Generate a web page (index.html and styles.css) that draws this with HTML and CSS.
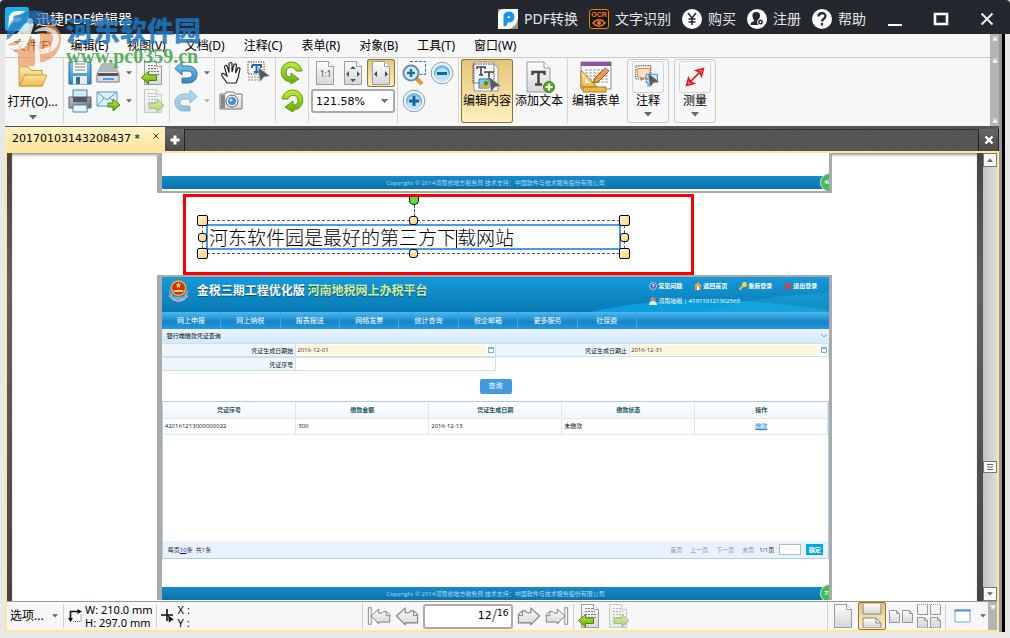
FILE: index.html
```html
<!DOCTYPE html>
<html lang="zh-CN">
<head>
<meta charset="utf-8">
<title>迅捷PDF编辑器</title>
<link rel="stylesheet" href="styles.css">
</head>
<body>
<svg class="defs" aria-hidden="true">
  <defs>
    <linearGradient id="blue" x1="0" y1="0" x2="0" y2="1"><stop offset="0" stop-color="#7cc8f2"/><stop offset="1" stop-color="#2f86c8"/></linearGradient>
    <linearGradient id="grey" x1="0" y1="0" x2="0" y2="1"><stop offset="0" stop-color="#fdfdfd"/><stop offset="1" stop-color="#d4d6d8"/></linearGradient>
    <linearGradient id="green" x1="0" y1="0" x2="0" y2="1"><stop offset="0" stop-color="#c2ec3c"/><stop offset="1" stop-color="#62a80c"/></linearGradient>
    <linearGradient id="gold" x1="0" y1="0" x2="0" y2="1"><stop offset="0" stop-color="#ffe9a8"/><stop offset="1" stop-color="#efb648"/></linearGradient>
    <linearGradient id="steel" x1="0" y1="0" x2="1" y2="1"><stop offset="0" stop-color="#c9cdd2"/><stop offset="1" stop-color="#646a72"/></linearGradient>
  </defs>
  <symbol id="sheet" viewBox="0 0 24 24"><path d="M3.500.5h12l5 5v18h-17z" fill="url(#grey)" stroke="#9a9c9e"/><path d="M15.500.5v5h5" fill="#fff" stroke="#9a9c9e"/></symbol>
  <symbol id="textsheet" viewBox="0 0 24 24"><use href="#sheet"/><path d="M7 4.500h8M7 7.500h10M7 10.500h11M7 13.500h11" stroke="#777" stroke-dasharray="2 1"/></symbol>
  <symbol id="prev" viewBox="0 0 24 24"><use href="#textsheet"/><path d="M.5 16.500l7-6v3.500h8v5.500h-8V23z" fill="url(#green)" stroke="#4c8708"/></symbol>
  <symbol id="next" viewBox="0 0 24 24"><use href="#textsheet"/><path d="M23 16.500l-7-6v3.500H8v5.500h8V23z" fill="url(#green)" stroke="#4c8708"/></symbol>
  <symbol id="undo" viewBox="0 0 24 24"><path d="M.8 7.500L8 1v4h6c12 0 12 17 0 17H8v-5h6c5.500 0 5.500-7 0-7H8v4z" fill="url(#blue)" stroke="#2c75ae"/></symbol>
  <symbol id="rotate" viewBox="0 0 24 24"><path d="M11 21C-2 20-2 2 11 1c6 0 10 4 11 9h-6c-1-5-10-5-10 1 0 4 2 5 5 5v-4l8 6-8 5z" fill="url(#green)" stroke="#579b0a"/></symbol>
  <symbol id="circle" viewBox="0 0 24 24"><circle cx="12" cy="12" r="10.800" fill="#f4f6f8" stroke="#8d9aa4"/><circle cx="12" cy="12" r="8" fill="url(#blue)"/><circle cx="12" cy="14" r="7" fill="#b8e3fb"/></symbol>
  <symbol id="caret" viewBox="0 0 8 5"><path d="M0 0h8L4 4.500z" fill="#666"/></symbol>
  <symbol id="cursor" viewBox="0 0 14 16"><path d="M1 0l12 9-6 1-4 5z" fill="#555b62" stroke="#dadada" stroke-width=".5"/></symbol>
  <symbol id="navarrow" viewBox="0 0 26 24"><path d="M1.500 12L11 3.500v5h4l2-2h3.500l4 4v9H11v2z" fill="url(#grey)" stroke="#808080" stroke-width="1.200"/><path d="M20 6.500v5h4.500" fill="none" stroke="#808080"/></symbol>
  <symbol id="collapse" viewBox="0 0 8 6"><path d="M1 .5h6M1 5h6M4 1L1 4h6z" fill="#fff" stroke="#fff" stroke-width=".8"/></symbol>
</svg>

<header class="titlebar">
  <svg class="app-logo" viewBox="0 0 24 24"><rect width="24" height="24" rx="3" fill="#1bb0ee"/><path d="M3 22C5 14 1 6 11 4h9c-1 4-4 4-8 4-3 0-4 2-4 4 4-2 6-2 9-1-1 4-4 4-7 4-4 1-5 4-7 7z" fill="#fff"/></svg>
  <h1 class="app-name">迅捷PDF编辑器</h1>
  <nav class="title-links">
    <a href="#convert"><svg viewBox="0 0 20 20"><path d="M0 0h20v20H0z" fill="#fff"/><path d="M0 0h6Q0 0 0 6zM20 20H10q9-2 10-11z" fill="#8b9299"/><path d="M6 17V6q1-3 5-3 5 0 5 5t-5 5H9.500V9.500H11q1.500 0 1.500-1.500T11 6.500q-2 0-2 2V14q0 3-3 3z" fill="#1994f0" stroke="#1994f0"/></svg>PDF转换</a>
    <a href="#ocr"><span class="ocr"><span>OCR</span><svg viewBox="0 0 14 8"><path d="M1 4q6-6.500 12 0-6 6.500-12 0z" fill="none" stroke="#f47a16" stroke-width="1.500"/><circle cx="7" cy="4" r="2" fill="#f47a16"/></svg></span>文字识别</a>
    <a href="#buy"><svg viewBox="0 0 20 20"><circle cx="10" cy="10" r="10" fill="#fff"/><path d="M6 4l4 5 4-5M10 9v7M6.500 10h7M6.500 13h7" fill="none" stroke="#25272f" stroke-width="1.500"/></svg>购买</a>
    <a href="#register"><svg viewBox="0 0 20 20"><circle cx="10" cy="10" r="10" fill="#fff"/><path d="M9 3c6 0 4 6 2.500 8l2 2V16H3.500c0-3 2-3 4-4C5 9 4 3 9 3z" fill="#25272f"/><circle cx="13.500" cy="13" r="3" fill="#25272f" stroke="#fff"/><circle cx="13.500" cy="13" r="1" fill="#fff"/></svg>注册</a>
    <a href="#help"><svg viewBox="0 0 20 20"><circle cx="10" cy="10" r="10" fill="#fff"/><path d="M6.500 7.500C6.500 3 13.500 3 13.500 7c0 3-3.500 2.500-3.500 5.500M10 14v2.500" fill="none" stroke="#25272f" stroke-width="2.200"/></svg>帮助</a>
  </nav>
  <div class="window-buttons">
    <button aria-label="最小化"><svg viewBox="0 0 16 16"><path d="M1 14h14" stroke="#fff" stroke-width="2"/></svg></button>
    <button aria-label="最大化"><svg viewBox="0 0 16 16"><path d="M2 3h12v10H2z" fill="none" stroke="#fff" stroke-width="2.600"/></svg></button>
    <button aria-label="关闭"><svg viewBox="0 0 16 16"><path d="M2.500 2.500l11 11M13.500 2.500l-11 11" stroke="#eee" stroke-width="2"/></svg></button>
  </div>
</header>

<main class="workspace">
  <div class="ribbon">
    <div class="ribbon-main">
      <nav class="menubar">
        <button>文件(F)</button><button>编辑(E)</button><button>视图(V)</button><button>文档(D)</button><button>注释(C)</button><button>表单(R)</button><button>对象(B)</button><button>工具(T)</button><button>窗口(W)</button>
      </nav>
      <div class="toolbar">
        <div class="group">
          <button class="open"><svg class="folder" viewBox="0 0 32 26"><path d="M1 24V3h10l3 4h12v5" fill="url(#gold)" stroke="#c98f2a"/><path d="M1 24l6-12h24l-5 12z" fill="url(#gold)" stroke="#c98f2a"/></svg><span>打开(O)...</span><svg class="caret"><use href="#caret"/></svg></button>
        </div>
        <div class="group icons three">
          <button aria-label="保存"><svg viewBox="0 0 24 24"><path d="M1 1h20l2 2v20H1z" fill="url(#blue)" stroke="#23689e"/><path d="M5 1h14v11H5z" fill="#fff"/><path d="M7 3h10M7 6h10M7 9h10" stroke="#777"/><path d="M5 15h14v8H5z" fill="#e6ebef"/><path d="M8 16h4v7H8z" fill="#3c6a91"/></svg></button>
          <button aria-label="扫描"><svg viewBox="0 0 24 24"><path d="M6 3h12l5 10v8H1v-8z" fill="url(#grey)" stroke="#777"/><path d="M1 11L6 3h12l5 8z" fill="#b4b7ba"/><path d="M2 12h20v3H2z" fill="#555"/><path d="M7 17h11v2H7z" fill="#49a0ef"/></svg></button>
          <button class="drop" aria-label="扫描选项"><svg class="caret"><use href="#caret"/></svg></button>
          <button aria-label="打印"><svg viewBox="0 0 24 24"><path d="M5 1h14v8H5z" fill="#d2ebf9" stroke="#4b84aa"/><path d="M1 8h22v11H1z" fill="url(#steel)" stroke="#666"/><path d="M5 8h14v5H5z" fill="#54595f"/><path d="M5 16h14v7H5z" fill="#eef7fd" stroke="#4b84aa"/></svg></button>
          <button aria-label="邮件"><svg viewBox="0 0 24 24"><path d="M1 3h20v14H1z" fill="#dff1fc" stroke="#4f9ac8"/><path d="M1 3l10 8L21 3M1 17l7-8M21 17l-7-8" fill="none" stroke="#4f9ac8"/><path d="M12 14h5v-4l7 6-7 6v-4h-5z" fill="url(#green)" stroke="#4c8708"/></svg></button>
          <button class="drop" aria-label="邮件选项"><svg class="caret"><use href="#caret"/></svg></button>
        </div>
        <div class="group icons one">
          <button aria-label="上一视图"><svg><use href="#prev"/></svg></button>
          <button aria-label="下一视图" disabled><svg><use href="#next"/></svg></button>
        </div>
        <div class="group icons two-drop">
          <button aria-label="撤销"><svg><use href="#undo"/></svg></button>
          <button class="drop" aria-label="撤销列表"><svg class="caret"><use href="#caret"/></svg></button>
          <button aria-label="重做" disabled><svg class="flip"><use href="#undo"/></svg></button>
          <button class="drop" aria-label="重做列表" disabled><svg class="caret"><use href="#caret"/></svg></button>
        </div>
        <div class="group icons two">
          <button aria-label="手形工具"><svg viewBox="0 0 24 24"><path d="M8 22l-5-7q-1-3 1.500-2.500L8 15 5.500 6q.5-2.500 2.500-1l2 6.500V2.500q1.500-2 3 0V11l2-7.500q2-1.500 2.500.5l-1 8L19 7q2-1 2 1l-2 9-2 5z" fill="#fff" stroke="#222" stroke-width="1.200"/></svg></button>
          <button aria-label="选择文本"><svg viewBox="0 0 24 24"><path d="M1 1h16v12H1z" fill="#fff" stroke="#444" stroke-dasharray="1.500 1"/><path d="M5 4h9v3M5 4v3M9.500 4v7M7 11h5" fill="none" stroke="#2167ad" stroke-width="2"/><path d="M1 16h12M1 19h12" stroke="#888" stroke-dasharray="2 1"/><use href="#cursor" x="10" y="6" width="14" height="16"/></svg></button>
          <button aria-label="快照"><svg viewBox="0 0 24 24"><path d="M1 5h5l1-2h8l1 2h7v15H1z" fill="url(#grey)" stroke="#777"/><path d="M2 6h4v13H2z" fill="#83888d"/><circle cx="13" cy="12" r="6" fill="#eee" stroke="#666"/><circle cx="13" cy="12" r="4" fill="#458cd8"/><circle cx="12" cy="11" r="1.500" fill="#bfe1ff"/></svg></button>
        </div>
        <div class="group icons one">
          <button aria-label="向左旋转"><svg><use href="#rotate"/></svg></button>
          <button aria-label="向右旋转"><svg class="flip"><use href="#rotate"/></svg></button>
        </div>
        <div class="group icons fit">
          <button aria-label="实际大小"><svg viewBox="0 0 24 24"><use href="#sheet"/><text x="7" y="16" class="one-one">1:1</text></svg></button>
          <button aria-label="适合页面"><svg viewBox="0 0 24 24"><use href="#sheet"/><path d="M12 5l3 3H9zM12 21l3-3H9zM5 13l3-3v6zM19 13l-3-3v6z" fill="#555"/></svg></button>
          <button class="on" aria-label="适合宽度"><svg viewBox="0 0 24 24"><use href="#sheet"/><path d="M5 13l3-3v6zM19 13l-3-3v6z" fill="#444"/></svg></button>
          <select class="zoom" aria-label="缩放"><option>121.58%</option></select>
        </div>
        <div class="group icons two">
          <button aria-label="区域放大"><svg viewBox="0 0 24 24"><path d="M8 .5h15.500v13H16" fill="none" stroke="#2c74b4" stroke-dasharray="3 1.500"/><path d="M14 17l6 6" stroke="#e79424" stroke-width="4"/><circle cx="9" cy="12" r="7.500" fill="#d8effc" stroke="#6c8ba6" stroke-width="2"/><path d="M9 8v8M5 12h8" stroke="#1a6cb0" stroke-width="2.500"/></svg></button>
          <button aria-label="缩小"><svg viewBox="0 0 24 24"><use href="#circle"/><path d="M7 11h10v3H7z" fill="#17649b"/></svg></button>
          <button aria-label="放大"><svg viewBox="0 0 24 24"><use href="#circle"/><path d="M12 7v10M7 12h10" stroke="#17649b" stroke-width="3"/></svg></button>
        </div>
        <div class="group wide">
          <button class="big on"><svg viewBox="0 0 32 32"><path d="M5 1h17l5 6v23H3V1z" fill="#f8f8f8" stroke="#999"/><path d="M2 3h21v19H2z" fill="none" stroke="#333" stroke-dasharray="1.500 1"/><path d="M6 8V6h8v2M10 6v8M8 14h4M14 12v-1h8v1M18 11v7M16 18h4" fill="none" stroke="#444" stroke-width="1.600"/><path d="M8 18h10v9H8z" fill="#88c7f4" stroke="#2b78a5"/><path d="M8 27l4-4 3 1 3-3v6z" fill="#e9a631"/><circle cx="15" cy="22" r="2.200" fill="#3a9625"/><use href="#cursor" x="17" y="16" width="14" height="16"/></svg><span>编辑内容</span></button>
          <button class="big"><svg viewBox="0 0 32 32"><path d="M4 1h17l6 6v24H4z" fill="url(#grey)" stroke="#999"/><path d="M21 1v6h6" fill="#fff" stroke="#999"/><path d="M9.500 14v-3h12v3M15.500 10.500V23M12 23.500h7" fill="none" stroke="#444" stroke-width="2.500"/><circle cx="26" cy="26" r="5.500" fill="#59a81f" stroke="#3e7e13"/><path d="M26 22.500v7M22.500 26h7" stroke="#fff" stroke-width="2.200"/></svg><span>添加文本</span></button>
        </div>
        <div class="group wide last">
          <button class="big"><svg viewBox="0 0 32 32"><path d="M1 1h30v27H1z" fill="#fafafa" stroke="#888"/><path d="M1 1h30v4H1z" fill="#8f50a8"/><path d="M5 9h24M5 12h24M5 15h24M5 18h24M5 21h24" stroke="#999" stroke-dasharray="3 1"/><path d="M1 9l16 17H1z" fill="url(#gold)" stroke="#b07a1e"/><path d="M5 17l5 5H5z" fill="#fff"/><path d="M3 26h23v5H3z" fill="#efb547" stroke="#b07a1e"/><path d="M13 22l2-5L25 7l4 3-11 11z" fill="#f49a3a" stroke="#8c5320"/><path d="M25 7l4 3-2 2-4-3z" fill="#e98da1"/></svg><span>编辑表单</span></button>
          <button class="big boxed"><i><svg viewBox="0 0 32 32"><path d="M5 7h13v9h-6l-3 4v-4H5z" fill="#ffe2c4" stroke="#e18a37"/><path d="M14 13h12v9h-7l-3 4v-4h-2z" fill="#cbe6fb" stroke="#3e88c3"/><path d="M3 4h16v14H3z" fill="none" stroke="#333" stroke-dasharray="1.500 1"/><use href="#cursor" x="15" y="12" width="14" height="16"/></svg></i><span>注释</span><svg class="caret"><use href="#caret"/></svg></button>
          <button class="big boxed"><i><svg viewBox="0 0 32 32"><path d="M10 22L22 10M7 25l2-8 2 4 4 2zM25 7l-2 8-2-4-4-2z" fill="#fa7777" stroke="#dc1c1c" stroke-width="1.600"/></svg></i><span>测量</span><svg class="caret"><use href="#caret"/></svg></button>
        </div>
      </div>
    </div>
    <div class="side-strip"><svg><use href="#collapse"/></svg><svg><use href="#collapse"/></svg><svg class="bottom"><use href="#collapse"/></svg></div>
  </div>

  <div class="tabbar">
    <div class="tab"><span>20170103143208437 <b>*</b></span><button aria-label="关闭标签"><svg viewBox="0 0 6 6"><path d="M.5.5l5 5M5.500.5l-5 5" stroke="#333"/></svg></button></div>
    <button class="tab-button" aria-label="新建标签"><svg viewBox="0 0 10 10"><path d="M5 .5v9M.5 5h9" stroke="#fff" stroke-width="3"/></svg></button>
    <button class="tab-button close" aria-label="关闭文档"><svg viewBox="0 0 10 10"><path d="M1.500 1.500l7 7M8.500 1.500l-7 7" stroke="#fff" stroke-width="2.400"/></svg></button>
  </div>

  <section class="frame">
    <div class="viewer">
      <div class="canvas">
        <article class="sheet first"><div class="copyright">Copyright © 2014河南省地方税务局 技术支持：中国软件与技术服务股份有限公司<span class="badge">48</span></div></article>

        <div class="edit-area">
          <div class="selection">
            <div class="text-box" role="textbox" aria-label="编辑文本">河东软件园是最好的第三方下<span class="text-caret"></span>载网站</div>
            <i class="handle nw"></i><i class="handle ne"></i><i class="handle sw"></i><i class="handle se"></i>
            <i class="handle small n"></i><i class="handle small s"></i><i class="handle small w"></i><i class="handle small e"></i>
            <i class="stem"></i><i class="turn"></i>
          </div>
        </div>

        <article class="sheet second">
          <header class="site-head">
            <svg class="swoosh" viewBox="0 0 210 36" preserveAspectRatio="none"><path d="M0 36Q75 2 150 18T205 36z" fill="#0a9fdb"/><path d="M100 36Q145 6 210 2v34z" fill="#24a9de" opacity=".4"/></svg>
            <svg class="emblem" viewBox="0 0 26 24"><path d="M1 15q5 3 12 7 7-4 12-7-3 7-12 9Q4 22 1 15z" fill="#d8e3f2" stroke="#355c98"/><path d="M3 10l5 8h10l5-8-1 9-9 4-9-4z" fill="#8aa4ca"/><circle cx="13" cy="9" r="7.500" fill="#d9271e" stroke="#f0b52f" stroke-width="1.600"/><path d="M13 3l1 2 2 .3-1.500 1.500.5 2-2-1-2 1 .5-2L10 5.300l2-.3zM8 11h10v2H8z" fill="#ffda46"/></svg>
            <h2>金税三期工程优化版 <em>河南地税网上办税平台</em></h2>
            <div class="site-links">
              <a href="#faq"><svg viewBox="0 0 8 8"><circle cx="4" cy="4" r="3.500" fill="#4764c4" stroke="#bcd"/><path d="M3 3q1-1.500 2 0L4 5" stroke="#fff" fill="none"/></svg>常见问题</a>
              <a href="#home"><svg viewBox="0 0 8 8"><path d="M0 4l4-4 4 4H7v4H1V4z" fill="#eb9639"/><path d="M3 4h2v4H3z" fill="#fff"/></svg>返回首页</a>
              <a href="#login"><svg viewBox="0 0 8 8"><path d="M0 8l5-5" stroke="#f4b63c" stroke-width="2"/><circle cx="5.500" cy="2.500" r="2.500" fill="#ffce52"/></svg>重新登录</a>
              <a href="#logout"><svg viewBox="0 0 8 8"><path d="M1 1l6 6M7 1L1 7" stroke="#ed3b32" stroke-width="2"/></svg>退出登录</a>
              <span><svg viewBox="0 0 8 8"><circle cx="4" cy="2.500" r="2.500" fill="#c88a58"/><path d="M0 8q0-4 4-4t4 4z" fill="#dce6ef"/></svg>河南地税 | 419110121302565</span>
            </div>
          </header>
          <nav class="site-nav"><a href="#1">网上申报</a><a href="#2">网上纳税</a><a href="#3">报表报送</a><a href="#4">网络发票</a><a href="#5">统计查询</a><a href="#6">税企邮箱</a><a href="#7">更多服务</a><a href="#8">社保费</a></nav>
          <div class="panel-title"><span>银行端缴款凭证查询</span><svg viewBox="0 0 6 4"><path d="M.5.5L3 3 5.500.5" fill="none" stroke="#58a5e1"/></svg></div>
          <form class="query">
            <label for="from">凭证生成日期始</label><div class="date"><input id="from" value="2016-12-01"><i></i></div>
            <label for="to">凭证生成日期止</label><div class="date"><input id="to" value="2016-12-31"><i></i></div>
            <label for="serial">凭证序号</label><div><input id="serial"></div>
            <button type="button" class="submit">查询</button>
          </form>
          <div class="results">
            <table>
              <thead><tr><th>凭证序号</th><th>缴款金额</th><th>凭证生成日期</th><th>缴款状态</th><th>操作</th></tr></thead>
              <tbody><tr><td>420161213000000022</td><td>300</td><td>2016-12-13</td><td>未缴款</td><td class="action"><a href="#pay">缴款</a></td></tr></tbody>
            </table>
          </div>
          <div class="pager"><span>每页<a href="#size">10</a>条&nbsp; 共1条</span><span class="pager-nav"><span>首页</span><span>上一页</span><span>下一页</span><span>末页</span><b>1/1页</b><input aria-label="页码"><button type="button">确定</button></span></div>
          <div class="copyright">Copyright © 2014河南省地方税务局 技术支持：中国软件与技术服务股份有限公司<span class="badge">73</span></div>
        </article>
      </div>
      <div class="scrollbar"><button aria-label="向上滚动"><svg class="caret flip-y"><use href="#caret"/></svg></button><button class="thumb" aria-label="滚动滑块"><svg viewBox="0 0 6 6"><path d="M0 .5h6M0 3h6M0 5.500h6" stroke="#666"/></svg></button><button aria-label="向下滚动"><svg class="caret"><use href="#caret"/></svg></button></div>
    </div>

    <footer class="status">
      <div class="status-main">
        <div class="cluster info">
          <button class="options">选项...<svg class="caret"><use href="#caret"/></svg></button>
          <div class="measure"><svg viewBox="0 0 14 14"><path d="M2.500 12V2.500H12" fill="none" stroke="#111" stroke-width="1.600"/><path d="M0 9h5l-2.500 4zM9.500 0v5L14 2.500z" fill="#111"/><path d="M5 12.500h8V5" fill="none" stroke="#666" stroke-dasharray="1 1"/></svg><p>W: 210.0 mm<br>H: 297.0 mm</p></div>
          <div class="measure"><svg viewBox="0 0 14 14"><path d="M6 0v12M0 6h12" stroke="#111" stroke-width="1.600"/><path d="M7 6l6 5-3 .500L8 14z" fill="#111"/></svg><p>X :<br>Y :</p></div>
        </div>
        <div class="cluster paging">
          <button aria-label="首页"><svg viewBox="0 0 26 24"><path d="M1.500 3h3v18h-3z" fill="#fff" stroke="#808080"/><use href="#navarrow" x="3" width="23" height="24"/></svg></button>
          <button aria-label="上一页"><svg><use href="#navarrow"/></svg></button>
          <label class="page-box"><input aria-label="当前页" value="12"><span>/</span><sup>16</sup></label>
          <button aria-label="下一页"><svg class="flip"><use href="#navarrow"/></svg></button>
          <button aria-label="末页"><svg class="flip" viewBox="0 0 26 24"><path d="M1.500 3h3v18h-3z" fill="#fff" stroke="#808080"/><use href="#navarrow" x="3" width="23" height="24"/></svg></button>
          <span class="rule"></span>
          <button aria-label="后退"><svg><use href="#prev"/></svg></button>
          <button aria-label="前进" disabled><svg><use href="#next"/></svg></button>
        </div>
        <div class="cluster layout">
          <button aria-label="单页"><svg><use href="#sheet"/></svg></button>
          <button class="on" aria-label="连续"><svg viewBox="0 0 24 24"><path d="M3 0v10h18V0" fill="url(#grey)" stroke="#888"/><path d="M3 24V14h13l5 5v5z" fill="url(#grey)" stroke="#888"/><path d="M16 14v5h5" fill="none" stroke="#888"/></svg></button>
          <button aria-label="双页"><svg viewBox="0 0 24 24"><path d="M.5 6.500h7l3 3v9H.5zM13.500 6.500h7l3 3v9h-10z" fill="url(#grey)" stroke="#999"/><path d="M7.500 6.500v3h3M20.500 6.500v3h3" fill="none" stroke="#999"/></svg></button>
          <button aria-label="连续双页"><svg viewBox="0 0 24 24"><path d="M.5 1v9.500h10V1M13.500 1v9.500h10V1M.5 24V13.500h7l3 3V24M13.500 24V13.500h7l3 3V24" fill="url(#grey)" stroke="#999"/><path d="M0 .5h24M0 23.500h24" stroke="#999" stroke-dasharray="1 1"/><path d="M7.500 13.500v3h3M20.500 13.500v3h3" fill="none" stroke="#999"/></svg></button>
          <span class="rule"></span>
          <button aria-label="窗口布局"><svg viewBox="0 0 24 24"><path d="M5 6h15v12H5z" fill="#fff" stroke="#7ba3ce"/><path d="M4.500 6.500h16" stroke="#5a8fd0" stroke-width="2"/></svg></button>
          <button class="drop" aria-label="布局选项"><svg class="caret"><use href="#caret"/></svg></button>
        </div>
      </div>
      <div class="side-strip"><svg class="flip-y"><use href="#collapse"/></svg></div>
    </footer>
  </section>
</main>

<aside class="watermark">
  <svg viewBox="0 0 56 56"><path d="M2 25A27 25 0 0 1 53 14L44 13Q34 16 26 12L18 14 1 32z" fill="#2b79bd" opacity=".8"/><path d="M24 22l6 12v-9q7-4 12-1l-2-9q14-2 16 13 0 17-17 24h-7l-3 4H13V43Q6 41 3 34l11-4z" fill="#ef9351" opacity=".8"/><path d="M1 30Q11 27 19 15q5-6 10-1l-6 19q-3 6-11 7-6 0-9-5 8 2 12-3l3-9Q11 33 1 34z" fill="#fff" opacity=".95"/><path d="M29 22q4-5 12-5 11 1 13 10 1 11-11 16-3 1-8 1v12h-5V27q0-4 5-3v15q13-1 13-10 0-8-8-8-5 0-11 1z" fill="#fff" opacity=".85"/><circle cx="25" cy="11" r="3" fill="#8fc6ec"/></svg>
  <div><strong>河东软件园</strong><span>www.pc0359.cn</span></div>
</aside>
</body>
</html>
```

FILE: styles.css
```css
* { box-sizing: border-box; }
html, body { margin: 0; }
body {
  position: relative;
  display: flex;
  flex-direction: column;
  min-height: 100vh;
  background: #e8e8e8;
  color: #000;
  font: 12px/16px "Noto Sans", "Noto Sans CJK SC", sans-serif;
}
button, input, select { margin: 0; padding: 0; border: 0; background: none; color: inherit; font: inherit; border-radius: 0; }
button { display: flex; align-items: center; justify-content: center; white-space: nowrap; }
button:disabled { opacity: .5; }
a { color: inherit; text-decoration: none; }
svg { display: block; flex: none; }
.defs { position: absolute; width: 0; height: 0; }
.flip { transform: scaleX(-1); }
.flip-y { transform: scaleY(-1); }
.caret { width: 6px; height: 4px; }

/* Title bar */
.titlebar { display: flex; align-items: center; height: 34px; padding: 4px 15px 0 5px; background: #25272f; border-radius: 4px 4px 0 0; color: #fff; }
.app-logo { width: 24px; height: 24px; }
.app-name { margin: 0 auto 0 7px; font-size: 14px; font-weight: 400; }
.title-links { display: flex; gap: 11px; font-size: 14px; color: #e6e6e6; }
.title-links a { display: flex; align-items: center; gap: 6px; }
.title-links svg { width: 20px; height: 20px; }
.ocr { display: grid; justify-items: center; align-content: center; width: 20px; height: 20px; border: 1px solid #f47a16; border-radius: 3px; background: #151515; color: #f47a16; font: 700 7px/8px "Liberation Sans", sans-serif; }
.title-links .ocr svg { width: 14px; height: 8px; }
.window-buttons { display: flex; gap: 30px; margin-left: 21px; }
.window-buttons svg { width: 16px; height: 16px; }

/* Ribbon */
.workspace { flex: 1; display: flex; flex-direction: column; margin: 0 5px 6px; padding-right: 3px; border-right: 3px solid #000; background: #999; }
.ribbon { display: flex; background: #f7f7f7; }
.ribbon-main { flex: 1; }
.side-strip { display: flex; flex-direction: column; align-items: center; gap: 16px; width: 9px; padding: 2px 0; background: #b4b4b4; }
.side-strip svg { width: 6px; height: 6px; }
.side-strip .bottom { margin-top: auto; }
.menubar { display: flex; gap: 19px; height: 24px; padding-left: 9px; border-bottom: 1px solid #ccc; }
.toolbar { display: flex; height: 68px; padding-bottom: 3px; }
.group { display: flex; border-right: 1px solid #d5d5d5; }
.icons { display: grid; grid-auto-rows: 24px; align-content: start; gap: 4px; padding: 3px 4px 0; }
.icons svg { width: 24px; height: 24px; }
.icons .caret { width: 6px; height: 4px; }
.one { grid-template-columns: 24px; }
.two { grid-template-columns: 24px 24px; }
.three { grid-template-columns: 24px 24px 10px; padding-right: 2px; }
.two-drop { grid-template-columns: 24px 10px; padding-right: 2px; }
.fit { grid-template-columns: 24px 24px 24px; }
.on { background: linear-gradient(#e5c579, #fff1bd); box-shadow: inset 0 0 0 1px #8f7335; border-radius: 3px; }
.fit .on { margin: -2px; }
.one-one { font: 8px "Noto Sans", sans-serif; fill: #444; }
.zoom { grid-column: 1 / -1; appearance: none; margin: 0 -2px; padding-left: 3px; border: 2px solid #aaa; border-radius: 3px; background: linear-gradient(#777, #777) no-repeat right 8px top 11px / 1px 1px, linear-gradient(#777, #777) no-repeat right 7px top 10px / 3px 1px, linear-gradient(#777, #777) no-repeat right 6px top 9px / 5px 1px, linear-gradient(#777, #777) no-repeat right 5px top 8px / 7px 1px, #fff; font: 11px "DejaVu Sans", sans-serif; }
.open { flex-direction: column; justify-content: flex-start; width: 58px; padding: 6px 3px 0 0; }
.folder { width: 32px; height: 24px; }
.open span { margin-top: 6px; }
.open .caret { width: 8px; height: 5px; margin-top: 5px; }
.big { flex-direction: column; justify-content: flex-start; width: 52px; padding-top: 2px; }
.big svg { width: 32px; height: 32px; }
.big .caret { width: 8px; height: 5px; margin-top: 3px; }
.wide { padding: 1px 2px 0; }
.last { border: 0; }
.boxed { width: 42px; margin-left: 5px; border: 1px solid #ccc; border-radius: 3px; padding-top: 1px; }
.boxed i { border: 1px solid #d5d5d5; border-radius: 3px; }
.boxed i svg { width: 30px; height: 30px; }

/* Document tabs */
.tabbar { display: flex; height: 25px; border-top: 3px solid #555; background: repeating-linear-gradient(45deg, #515151 0 1px, #575757 1px 3px); box-shadow: inset 0 1px #333; }
.tab { display: flex; align-items: flex-start; justify-content: space-between; width: 160px; margin-top: -2px; padding: 4px 6px 0 7px; background: linear-gradient(#fff3c3, #ffe69a); font: 11px/16px "DejaVu Sans", sans-serif; }
.tab b { color: #173d66; font-size: 10px; }
.tab svg { width: 6px; height: 6px; margin-top: 2px; }
.tab-button { width: 20px; border-right: 1px solid #222; background: linear-gradient(#666, #4b4b4b); }
.tab-button svg { width: 10px; height: 10px; }
.tab-button.close { width: 21px; margin-left: auto; border-left: 1px solid #222; }

/* Viewer */
.frame { flex: 1; display: flex; flex-direction: column; border: 2px solid #ffe89a; }
.viewer { flex: 1; display: flex; height: 448px; padding-left: 5px; background: linear-gradient(#444, #626262 30%, #444); }
.canvas { flex: 1; height: 448px; overflow: hidden; background: #fff; box-shadow: inset 0 3px 3px -1px #999; }
.scrollbar { display: flex; flex-direction: column; width: 14px; margin-left: 6px; background: linear-gradient(90deg, #c2c2c2, #ddd); }
.scrollbar button { height: 14px; background: #f8f8f8; border: 1px solid #777; }
.scrollbar .thumb { height: 12px; margin: auto 0 114px; }
.thumb svg { width: 6px; height: 6px; }
.sheet { position: relative; width: 70%; margin: 0 15%; overflow: hidden; border: solid #aaa; border-width: 2px 3px 0 5px; background: #fff; color: #333; font: 6px/8px "Open Sans", "Noto Sans CJK SC", sans-serif; }
.first { border-width: 0 3px 2px 5px; padding: 23px 0 2px; }
.copyright { display: flex; align-items: center; justify-content: center; height: 13px; background: linear-gradient(#158ccb, #0b72ac); color: #b0def2; }
.badge { position: absolute; right: -10px; width: 19px; height: 19px; padding-left: 3px; border: 1px solid #dfe8df; border-radius: 50%; background: #43bd52; color: #fff; line-height: 17px; font-weight: 700; }

/* Text editing overlay */
.edit-area { width: 53%; height: 81px; margin: 1px 0 0 171px; padding: 23px 66px 18px 16px; border: 3px solid #f00; background: #fff; }
.selection { position: relative; height: 34px; padding: 3px; border: 1px dashed #555; }
.text-box { height: 26px; padding-left: 1px; overflow: hidden; border: 2px solid #4898f5; font: 300 19px/22px "Noto Sans CJK SC", sans-serif; white-space: nowrap; }
.text-caret { display: inline-block; width: 1px; height: 20px; background: #000; vertical-align: middle; }
.handle { position: absolute; width: 11px; height: 11px; border: 1px solid #000; border-radius: 2px; background: linear-gradient(135deg, #fff8e5, #ffce65); }
.small { width: 9px; height: 9px; border-radius: 3px; }
.nw, .sw { left: -6px; }
.ne, .se { right: -6px; }
.nw, .ne { top: -6px; }
.sw, .se { bottom: -6px; }
.n, .s { left: calc(50% - 5px); }
.n { top: -5px; }
.s { bottom: -5px; }
.w, .e { top: 12px; }
.w { left: -5px; }
.e { right: -5px; }
.stem { position: absolute; left: 50%; top: -16px; height: 11px; border-left: 1px dashed #555; }
.turn { position: absolute; left: calc(50% - 5px); top: -24px; width: 10px; height: 8px; border: 1px solid #000; border-top: 0; border-radius: 0 0 6px 6px; background: #4ee544; }

/* Tax site page */
.site-head { position: relative; display: flex; height: 35px; padding: 2px 12px 0 4px; background: linear-gradient(#159ad9, #0879b4); color: #fff; }
.swoosh { position: absolute; right: 0; bottom: 0; width: 36%; height: 20px; }
.emblem { width: 25px; height: 24px; }
.site-head h2 { margin: 3px auto 0 6px; font: 700 12px/16px "Noto Sans CJK SC", sans-serif; white-space: nowrap; text-shadow: 0 1px 1px #07517c; }
.site-head em { color: #d5ef9a; font-style: normal; }
.site-links { position: relative; display: grid; grid-template-columns: repeat(4, auto); gap: 7px 12px; align-content: start; padding-top: 3px; font-weight: 700; }
.site-links a, .site-links span { display: flex; align-items: center; gap: 1px; }
.site-links span { grid-column: 1 / -1; font-weight: 400; }
.site-links svg { width: 8px; height: 8px; }
.site-nav { display: flex; height: 17px; background: linear-gradient(#4cb9f0, #1582c8 60%, #259be0); color: #fff; font-size: 7px; }
.site-nav a { display: grid; place-items: center; width: 8.9%; border-right: 1px solid #3ba8e3; }
.panel-title { display: flex; align-items: center; justify-content: space-between; height: 14px; padding: 0 2px 0 5px; background: linear-gradient(#e8f4ff, #d4e9fc); color: #000; }
.panel-title svg { width: 6px; height: 4px; }
.query { display: grid; grid-template-columns: 20% 30% 20% 30%; grid-template-rows: 14px 14px 30px; }
.query label { padding: 3px 2px 0; border: solid #cde1e8; border-width: 1px 0; background: #eff6fd; text-align: right; color: #111; }
.query > div { display: flex; align-items: center; border: 1px solid #cde1e8; padding: 1px; }
.query input { width: 100%; height: 10px; }
.date input { background: #fff7d9; }
.date i { width: 6px; height: 6px; margin-left: 2px; border: 1px solid #6db8eb; border-top-width: 2px; }
.submit { grid-column: 1 / -1; align-self: center; justify-self: center; width: 32px; height: 15px; border-radius: 2px; background: #429bdf; color: #fff; font-size: 7px; }
.results { min-height: 140px; border: 1px solid #a9cfeb; border-bottom: 0; }
table { width: 100%; table-layout: fixed; border-collapse: collapse; }
th, td { height: 16px; padding: 0 2px; border-right: 1px solid #dce8ee; border-bottom: 1px solid #e0e9ed; font-size: 6px; text-align: left; }
th { background: linear-gradient(#fff, #f2f7fb); color: #265568; text-align: center; }
td { color: #111; }
.action { text-align: center; }
.action a { color: #187bd5; text-decoration: underline; }
.pager { display: flex; align-items: center; justify-content: space-between; height: 18px; margin-bottom: 28px; padding: 0 5px; border: 1px solid #a9d3f4; border-top: 0; background: #e8f2fd; }
.pager a { color: #00f; text-decoration: underline; }
.pager-nav { display: flex; align-items: center; gap: 8px; color: #999; }
.pager-nav b { margin: 0 -3px; color: #333; font-weight: 400; }
.pager-nav input { width: 22px; height: 11px; border: 1px solid #bbb; background: #fff; }
.pager-nav button { width: 17px; height: 11px; margin-left: -3px; background: #00a8ec; color: #fff; font-weight: 700; }

/* Status bar */
.status { display: flex; height: 29px; border-top: 1px solid #999; background: #f7f7f7; }
.status-main { flex: 1; display: grid; grid-template-columns: 1fr auto 1fr; }
.cluster { display: flex; align-items: center; }
.options { width: 56px; justify-content: space-between; padding: 0 5px 0 3px; }
.measure { display: flex; align-items: center; gap: 3px; height: 24px; padding: 0 3px 0 4px; border-left: 1px solid #d0d0d0; }
.measure svg { width: 14px; height: 14px; }
.measure p { margin: 0; font-size: 11px; line-height: 13px; white-space: nowrap; }
.paging { gap: 4px; padding: 0 4px; border-left: 1px solid #d0d0d0; }
.paging svg { width: 24px; height: 24px; }
.page-box { display: flex; align-items: center; width: 90px; height: 25px; padding-right: 2px; border: 2px solid #aaa; border-radius: 3px; background: #fff; font: 11px/20px "DejaVu Sans", sans-serif; }
.page-box input { flex: 1; width: 10px; text-align: right; }
.page-box span { color: #777; font-size: 16px; }
.page-box sup { font-size: 9px; line-height: 12px; margin-bottom: 6px; vertical-align: baseline; }
.layout { justify-self: end; gap: 4px; padding-left: 3px; border-left: 1px solid #d0d0d0; }
.layout svg { width: 24px; height: 24px; }
.layout .caret { width: 6px; height: 4px; }
.layout .on { width: 28px; height: 28px; margin: 0 -1px; }
.drop { width: 10px; }
.rule { width: 1px; height: 25px; background: #d0d0d0; }

/* Watermark */
.watermark { position: absolute; top: 10px; left: 5px; display: flex; gap: 5px; pointer-events: none; opacity: .85; }
.watermark svg { width: 56px; height: 56px; }
.watermark div { display: flex; flex-direction: column; padding-top: 5px; }
.watermark strong { color: #1b78c2; font: 900 27px/30px "Noto Sans CJK SC", sans-serif; }
.watermark span { color: #3fa547; font: 700 20px/22px "Liberation Serif", serif; }
```
